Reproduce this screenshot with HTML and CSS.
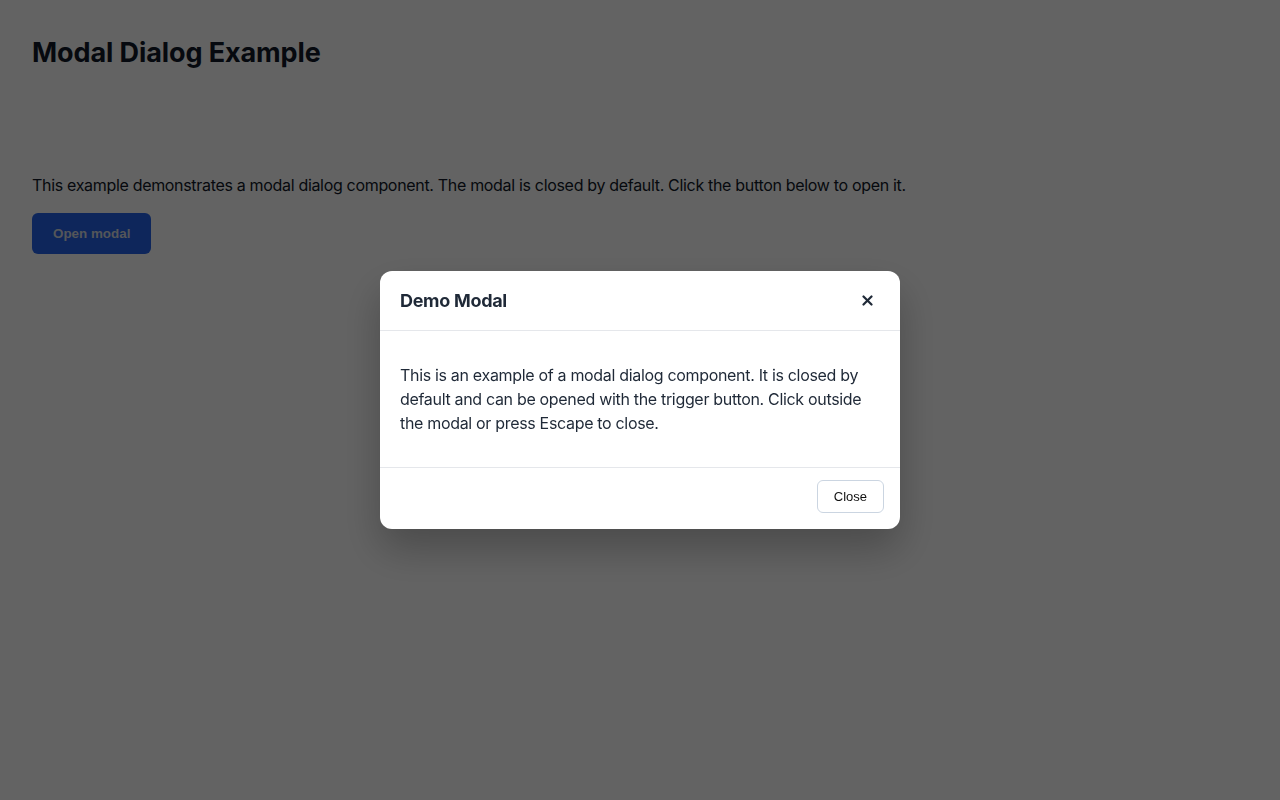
FILE: index.html
```html
<!DOCTYPE html>
<html lang="en">
<head>
<meta charset="utf-8">
<title>Modal Dialog Example</title>
<link rel="stylesheet" href="styles.css">
</head>
<body>
<main class="page">
  <h1 class="page-title">Modal Dialog Example</h1>
  <p class="intro">This example demonstrates a modal dialog component. The modal is closed by default. Click the button below to open it.</p>
  <button class="btn-primary" type="button">Open modal</button>
</main>
<div class="backdrop">
  <div class="modal" role="dialog" aria-labelledby="modal-title">
    <div class="modal-header">
      <h2 class="modal-title" id="modal-title">Demo Modal</h2>
      <button class="modal-x" type="button" aria-label="Close">
        <svg width="11" height="11" viewBox="0 0 11 11" aria-hidden="true"><path d="M1.5 1.5L9.5 9.5M9.5 1.5L1.5 9.5" stroke="currentColor" stroke-width="2.2" stroke-linecap="round"/></svg>
      </button>
    </div>
    <div class="modal-body">
      <p>This is an example of a modal dialog component. It is closed by default and can be opened with the trigger button. Click outside the modal or press Escape to close.</p>
    </div>
    <div class="modal-footer">
      <button class="btn-secondary" type="button">Close</button>
    </div>
  </div>
</div>
</body>
</html>
```
FILE: styles.css
```css
* { box-sizing: border-box; }
html, body { margin: 0; height: 100%; }
body {
  font-family: Inter, "Noto Sans", sans-serif;
  background: #ffffff;
  color: #111827;
}
.page {
  padding: 32px;
}
.page-title {
  margin: 0;
  padding-top: 5px;
  font-size: 27px;
  line-height: 32px;
  font-weight: 700;
  letter-spacing: -0.1px;
}
.intro {
  margin: 104px 0 16px;
  font-size: 16px;
  line-height: 24px;
  letter-spacing: -0.32px;
}
.btn-primary {
  font-family: "Liberation Sans", Arial, sans-serif;
  font-size: 13.4px;
  font-weight: 700;
  color: #d8dde6;
  background: #2563eb;
  border: 0;
  border-radius: 6px;
  height: 41px;
  padding: 0 21px;
  line-height: 17px;
}
.backdrop {
  position: fixed;
  inset: 0;
  background: rgba(0, 0, 0, 0.61);
  display: flex;
  align-items: center;
  justify-content: center;
}
.modal {
  width: 520px;
  background: #ffffff;
  border-radius: 12px;
  box-shadow: 0 20px 40px rgba(0, 0, 0, 0.25);
  overflow: hidden;
}
.modal-header {
  display: flex;
  align-items: center;
  justify-content: space-between;
  height: 60px;
  padding: 0 20px;
  border-bottom: 1px solid #e5e7eb;
}
.modal-title {
  margin: 0;
  font-size: 18px;
  line-height: 27px;
  font-weight: 700;
  color: #1f2937;
  letter-spacing: -0.3px;
}
.modal-x {
  width: 24px;
  height: 24px;
  margin-right: 1px;
  border: 0;
  background: transparent;
  color: #1f2937;
  display: flex;
  align-items: center;
  justify-content: center;
  padding: 0;
}
.modal-body {
  padding: 32px 20px;
}
.modal-body p {
  margin: 0;
  font-size: 16px;
  line-height: 24px;
  color: #1f2937;
  letter-spacing: -0.32px;
}
.modal-footer {
  display: flex;
  justify-content: flex-end;
  align-items: flex-start;
  height: 62px;
  padding: 12px 16px 0;
  border-top: 1px solid #e5e7eb;
}
.btn-secondary {
  font-family: "Liberation Sans", Arial, sans-serif;
  font-size: 13px;
  line-height: 15px;
  color: #111111;
  background: #ffffff;
  border: 1px solid #cbd5e1;
  border-radius: 6px;
  height: 33px;
  padding: 0 16px;
}
```
